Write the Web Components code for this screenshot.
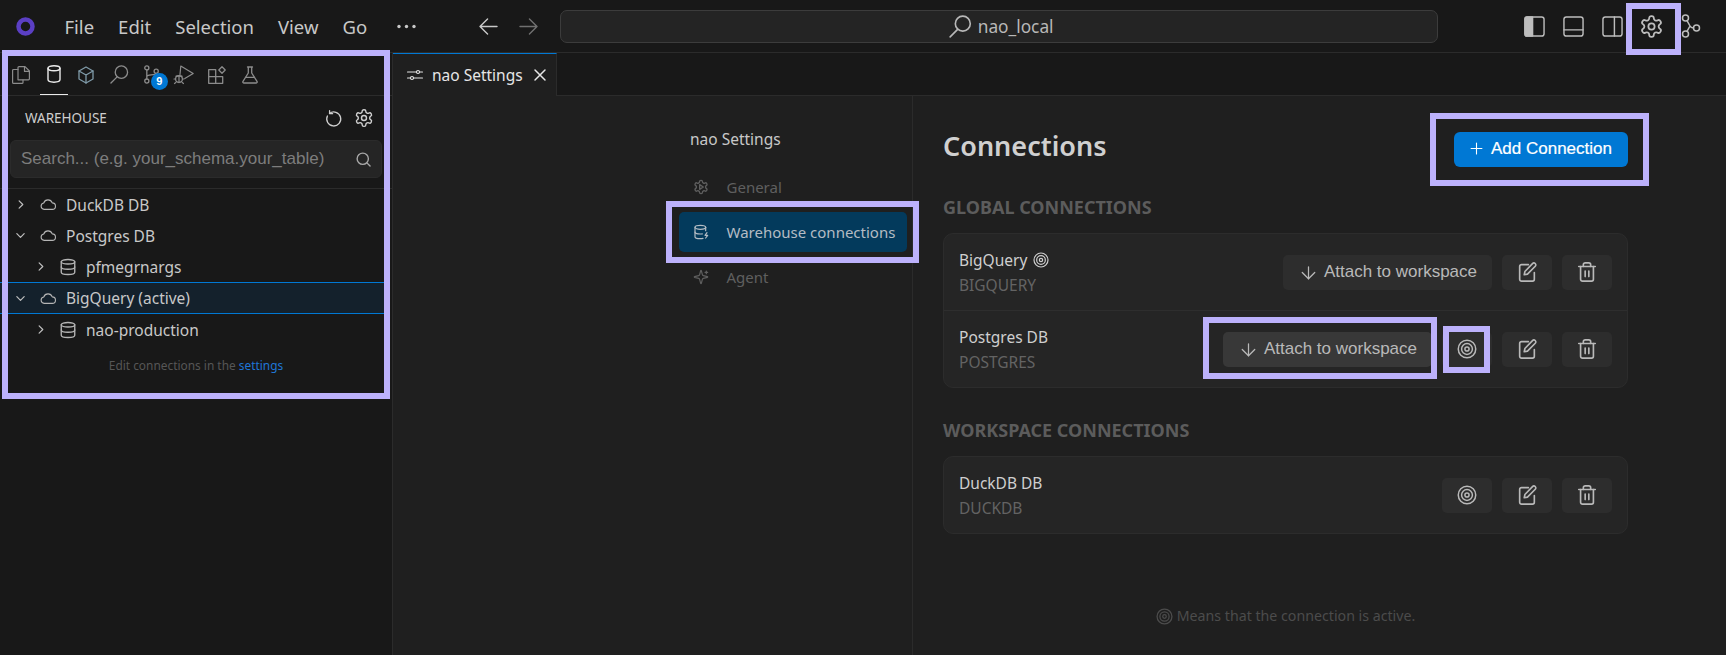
<!DOCTYPE html>
<html lang="en">
<head>
<meta charset="UTF-8">
<title>nao Settings</title>
<style>
  html, body { margin: 0; height: 100%; overflow: hidden; background: #181818; }
  body { font-family: "Noto Sans", "Open Sans", sans-serif; color: #cccccc; }
</style>
</head>
<body>
<nao-app></nao-app>

<script>
  const SW = 'fill="none" stroke="currentColor" stroke-linecap="round" stroke-linejoin="round"';
  const GEAR = '<path d="M12.22 2h-.44a2 2 0 0 0-2 2v.18a2 2 0 0 1-1 1.73l-.43.25a2 2 0 0 1-2 0l-.15-.08a2 2 0 0 0-2.73.73l-.22.38a2 2 0 0 0 .73 2.73l.15.1a2 2 0 0 1 1 1.72v.51a2 2 0 0 1-1 1.74l-.15.09a2 2 0 0 0-.73 2.73l.22.38a2 2 0 0 0 2.73.73l.15-.08a2 2 0 0 1 2 0l.43.25a2 2 0 0 1 1 1.73V20a2 2 0 0 0 2 2h.44a2 2 0 0 0 2-2v-.18a2 2 0 0 1 1-1.73l.43-.25a2 2 0 0 1 2 0l.15.08a2 2 0 0 0 2.73-.73l.22-.39a2 2 0 0 0-.73-2.73l-.15-.08a2 2 0 0 1-1-1.74v-.5a2 2 0 0 1 1-1.74l.15-.09a2 2 0 0 0 .73-2.73l-.22-.38a2 2 0 0 0-2.73-.73l-.15.08a2 2 0 0 1-2 0l-.43-.25a2 2 0 0 1-1-1.73V4a2 2 0 0 0-2-2z"/>';
  // every icon is [viewBox, stroke width, markup]
  const ICONS = {
    gear: ['0 0 24 24', 1.7, GEAR + '<circle cx="12" cy="12" r="3"/>'],
    generalcog: ['0 0 24 24', 2, GEAR + '<path d="M10 8.5v7l5.5-3.5z"/>'],
    target: ['0 0 24 24', 1.8, '<circle cx="12" cy="12" r="10.5"/><circle cx="12" cy="12" r="6.5"/><circle cx="12" cy="12" r="2.5"/>'],
    edit: ['0 0 24 24', 1.8, '<path d="M20 12.5V20a2 2 0 0 1-2 2H6a2 2 0 0 1-2-2V6a2 2 0 0 1 2-2h7.5"/><path d="M18 2.8a2 2 0 0 1 3 2.9L12.5 14.3 9 15l.7-3.5z"/>'],
    trash: ['0 0 24 24', 1.8, '<path d="M3 6h18"/><path d="M19 6v14a2 2 0 0 1-2 2H7a2 2 0 0 1-2-2V6"/><path d="M8 6V4a2 2 0 0 1 2-2h4a2 2 0 0 1 2 2v2"/><path d="M10 11v6"/><path d="M14 11v6"/>'],
    down: ['0 0 24 24', 2, '<path d="M12 3v19"/><path d="M22 12 12 22 2 12"/>'],
    plus: ['0 0 24 24', 2, '<path d="M12 2v20"/><path d="M2 12h20"/>'],
    chevright: ['0 0 24 24', 2.6, '<path d="m9 4 8 8-8 8"/>'],
    chevdown: ['0 0 24 24', 2.6, '<path d="m4 8 8 8 8-8"/>'],
    cloud: ['0 0 24 17', 1.7, '<path d="M18.5 16H6a5 5 0 0 1-.6-9.9A7 7 0 0 1 18.6 6 5 5 0 0 1 18.5 16z"/>'],
    db: ['0 0 24 24', 1.8, '<ellipse cx="12" cy="5" rx="9" ry="3"/><path d="M3 5v14a9 3 0 0 0 18 0V5"/><path d="M3 12a9 3 0 0 0 18 0"/>'],
    dbzap: ['0 0 24 24', 1.8, '<ellipse cx="11" cy="5" rx="8" ry="3"/><path d="M3 5v14c0 1.7 3.6 3 8 3 1.5 0 3-.2 4-.5"/><path d="M3 12c0 1.7 3.6 3 8 3 1 0 2-.1 3-.3"/><path d="M19 5v5"/><path d="M21 13l-3 4h4l-3 4"/>'],
    sparkle: ['0 0 24 24', 1.8, '<path d="M9.937 15.5A2 2 0 0 0 8.5 14.063l-6.135-1.582a.5.5 0 0 1 0-.962L8.5 9.936A2 2 0 0 0 9.937 8.5l1.582-6.135a.5.5 0 0 1 .963 0L14.063 8.5A2 2 0 0 0 15.5 9.937l6.135 1.581a.5.5 0 0 1 0 .964L15.5 14.063a2 2 0 0 0-1.437 1.437l-1.582 6.135a.5.5 0 0 1-.963 0z"/><path d="M20 3v4"/><path d="M22 5h-4"/>'],
    sliders: ['0 0 16 12', 1.1, '<path d="M0.5 3h9M12.5 3h3M0.5 9h3M6.5 9h9"/><circle cx="11" cy="3" r="1.5"/><circle cx="5" cy="9" r="1.5"/>'],
    close: ['0 0 12 12', 1.5, '<path d="M1 1l10 10M11 1L1 11"/>'],
    search: ['0 0 20 20', 1.4, '<circle cx="12" cy="7.5" r="6.5"/><path d="M7.5 12.5 1 19"/>'],
    lens: ['0 0 16 16', 1.5, '<circle cx="7.2" cy="7.2" r="6"/><path d="M11.6 11.6 15 15"/>'],
    files: ['0 0 18 18', 1.2, '<path d="M6 3.5H1.6a1 1 0 0 0-1 1V16.4a1 1 0 0 0 1 1H10a1 1 0 0 0 1-1V14"/><path d="M6 13.8V1.6a1 1 0 0 1 1-1h6l4.4 4.4V12.8a1 1 0 0 1-1 1z"/><path d="M12.5 .8v4.6h4.8"/>'],
    cyl: ['0 0 14 18', 1.4, '<ellipse cx="7" cy="3.2" rx="6" ry="2.5"/><path d="M1 3.2v11.4c0 1.4 2.7 2.6 6 2.6s6-1.2 6-2.6V3.2"/>'],
    cube: ['0 0 16 18', 1.3, '<path d="M8 1 15 5v8l-7 4-7-4V5z"/><path d="M1 5l7 4 7-4M8 9v8"/>'],
    scm: ['0 0 16 20', 1.4, '<circle cx="3" cy="3" r="2.2"/><circle cx="3" cy="17" r="2.2"/><circle cx="13" cy="6.5" r="2.2"/><path d="M3 5.2v9.6M3 12c0-2 10-1 10-3.3"/>'],
    debug: ['0 0 20 19', 1.2, '<path d="M6 9.5 6.8 1l12.4 7.4-8.4 5"/><circle cx="5" cy="14" r="3.4"/><path d="M2 11.2h6M1.6 14H0M8.4 14h1.6M1.8 17.6.5 18.5M8.2 17.6l1.3.9M5 10.6v7"/>'],
    ext: ['0 0 18 18', 1.3, '<path d="M.7 3.7h7v7h-7zM.7 10.7h7v6.6h-7zM7.7 10.7h7v6.6h-7z"/><path d="M14 .8 17.2 4 14 7.2 10.8 4z"/>'],
    flask: ['0 0 16 18', 1.3, '<path d="M5.5 1h5M6.3 1v6L1 15.3c-.5.8 0 1.7 1 1.7h12c1 0 1.5-.9 1-1.7L9.7 7V1"/><path d="M3.6 11.4h8.8"/>'],
    refresh: ['0 0 16 16', 1.3, '<path d="M3.5 3.4A7 7 0 1 1 1.4 6"/><path d="M3.6.7v3h3"/>'],
    back: ['0 0 20 18', 1.5, '<path d="M1 9h18M9 1 1 9l8 8"/>'],
    forward: ['0 0 20 18', 1.5, '<path d="M1 9h18M11 1l8 8-8 8"/>'],
    panelleft: ['0 0 22 22', 1.5, '<rect x="1" y="1" width="20" height="20" rx="2.5"/><path d="M3 1h6v20H3a2 2 0 0 1-2-2V3a2 2 0 0 1 2-2z" fill="currentColor"/>'],
    panelbottom: ['0 0 22 22', 1.5, '<rect x="1" y="1" width="20" height="20" rx="2.5"/><path d="M1 14.5h20"/>'],
    panelright: ['0 0 22 22', 1.5, '<rect x="1" y="1" width="20" height="20" rx="2.5"/><path d="M13 1v20"/>'],
    fork: ['0 0 20 24', 1.5, '<circle cx="4.500" cy="4" r="3"/><circle cx="4.500" cy="20" r="3"/><circle cx="15.500" cy="14" r="3"/><path d="M6 6.600 9 12c.5 1 1.300 1.800 3.500 2M6 17.400 9 12"/>']
  };

  class UiIcon extends HTMLElement {
    connectedCallback() {
      const [box, sw, body] = ICONS[this.getAttribute('name')];
      const w = this.getAttribute('w') || 16;
      const h = this.getAttribute('h') || w;
      const root = this.shadowRoot || this.attachShadow({ mode: 'open' });
      root.innerHTML = `
        <style>:host { display: inline-flex; flex: none; } svg { display: block; overflow: visible; }</style>
        <svg width="${w}" height="${h}" viewBox="${box}" stroke-width="${sw}" ${SW}>${body}</svg>`;
    }
  }
  customElements.define('ui-icon', UiIcon);

  class TitleBar extends HTMLElement {
    constructor() {
      super();
      this.attachShadow({ mode: 'open' });
      this.shadowRoot.innerHTML = `
        <style>
          :host { display: flex; align-items: center; height: 52px; background: #181818; border-bottom: 1px solid #2b2b2b; padding-left: 16px; font-size: 18.500px; color: #c8c8c8; }
          .logo { width: 19px; height: 19px; margin-right: 29.500px; flex: none; }
          .menus { display: flex; gap: 24px; }
          .dots { margin-left: 29.500px; width: 19px; color: #c8c8c8; }
          .nav { display: flex; gap: 21px; margin-left: 63px; color: #c8c8c8; }
          .nav .off { color: #707070; }
          .center { width: 878px; height: 33px; margin-left: 22px; box-sizing: border-box; background: #242424; border: 1px solid #3c3c3c; border-radius: 7px; display: flex; align-items: center; justify-content: center; gap: 6px; padding-left: 5px; color: #b8b8b8; font-size: 17.300px; }
          .right { display: flex; align-items: center; margin-left: 86px; gap: 18px; color: #bdbdbd; }
        </style>
        <svg class="logo" viewBox="0 0 19 19"><circle cx="9.500" cy="9.500" r="7" fill="none" stroke="#5b3fc4" stroke-width="4.500"/></svg>
        <div class="menus"><span>File</span><span>Edit</span><span>Selection</span><span>View</span><span>Go</span></div>
        <svg class="dots" viewBox="0 0 19 5" height="5"><g fill="currentColor"><circle cx="2" cy="2.500" r="1.700"/><circle cx="9.500" cy="2.500" r="1.700"/><circle cx="17" cy="2.500" r="1.700"/></g></svg>
        <div class="nav"><ui-icon name="back" w="19" h="17"></ui-icon><ui-icon class="off" name="forward" w="19" h="17"></ui-icon></div>
        <div class="center"><ui-icon name="search" w="23"></ui-icon><span>nao_local</span></div>
        <div class="right">
          <ui-icon name="panelleft" w="21"></ui-icon>
          <ui-icon name="panelbottom" w="21"></ui-icon>
          <ui-icon name="panelright" w="21"></ui-icon>
          <ui-icon style="margin-left:-2px" name="gear" w="25"></ui-icon>
          <ui-icon style="margin-left:-1px" name="fork" w="20" h="24"></ui-icon>
        </div>`;
    }
  }
  customElements.define('title-bar', TitleBar);

  class ActivityTabs extends HTMLElement {
    constructor() {
      super();
      this.attachShadow({ mode: 'open' });
      this.shadowRoot.innerHTML = `
        <style>
          :host { display: flex; gap: 4.700px; height: 43px; padding-left: 7px; border-bottom: 1px solid #2b2b2b; box-sizing: border-box; color: #8c8c8c; }
          div { width: 28px; height: 42px; display: flex; align-items: center; justify-content: center; padding-top: 1px; box-sizing: border-box; position: relative; }
          .on { color: #eaeaea; border-bottom: 1px solid #eaeaea; }
          .badge { position: absolute; left: 13px; top: 20px; width: 17px; height: 17px; border-radius: 50%; background: #0078d4; color: #fff; font: bold 11px/17px "Liberation Sans", sans-serif; text-align: center; }
        </style>
        <div><ui-icon name="files" w="18"></ui-icon></div>
        <div class="on"><ui-icon name="cyl" w="14" h="18"></ui-icon></div>
        <div style="color:#7f9aa8"><ui-icon name="cube" w="16" h="18"></ui-icon></div>
        <div><ui-icon name="search" w="19"></ui-icon></div>
        <div><ui-icon name="scm" w="15" h="19"></ui-icon><span class="badge">9</span></div>
        <div><ui-icon name="debug" w="20" h="19"></ui-icon></div>
        <div><ui-icon name="ext" w="18"></ui-icon></div>
        <div><ui-icon name="flask" w="16" h="18"></ui-icon></div>`;
    }
  }
  customElements.define('activity-tabs', ActivityTabs);

  class TreeRow extends HTMLElement {
    constructor() {
      super();
      this.attachShadow({ mode: 'open' });
    }
    connectedCallback() {
      const level = +this.getAttribute('level') || 0;
      const open = this.hasAttribute('open');
      const icon = level ? 'db' : 'cloud';
      this.shadowRoot.innerHTML = `
        <style>
          :host { display: flex; align-items: center; height: 31px; box-sizing: border-box; font-size: 15.500px; color: #c8c8c8; padding-left: ${15 + level * 20}px; }
          :host([active]) { height: 32px; margin-right: 6px; background: #14212c; border-top: 1px solid #0078d4; border-bottom: 1px solid #0078d4; }
          .ch { width: 10px; display: flex; justify-content: center; color: #c0c0c0; }
          .ic { margin-left: ${level ? 14 : 15}px; display: flex; color: #b5b5b5; }
          .t { margin-left: ${level ? 9 : 10}px; }
        </style>
        <span class="ch"><ui-icon name="${open ? 'chevdown' : 'chevright'}" w="11"></ui-icon></span>
        <span class="ic"><ui-icon name="${icon}" w="${level ? 18 : 16}" h="${level ? 18 : 11}"></ui-icon></span>
        <span class="t"><slot></slot></span>`;
    }
  }
  customElements.define('tree-row', TreeRow);

  class SidePanel extends HTMLElement {
    constructor() {
      super();
      this.attachShadow({ mode: 'open' });
      this.shadowRoot.innerHTML = `
        <style>
          :host { display: block; width: 393px; box-sizing: border-box; flex: none; background: #181818; border-right: 1px solid #2b2b2b; }
          .head { display: flex; align-items: center; height: 44px; padding: 0 18px 0 25px; font-size: 13.500px; color: #cfcfcf; }
          .head span { flex: 1; }
          .head ui-icon + ui-icon { margin-left: 12px; }
          .find { display: flex; align-items: center; height: 38px; margin: 0 10px; padding: 0 10px 0 10px; box-sizing: border-box; background: #252525; border: 1px solid #2b2b2b; border-radius: 6px; font: 17px "Liberation Sans", Arial, sans-serif; color: #7d7d7d; }
          .find span { flex: 1; white-space: nowrap; }
          .find ui-icon { color: #a8a8a8; }
          hr { border: 0; border-top: 1px solid #2b2b2b; margin: 10px 0 0; }
          .note { text-align: center; font-size: 11.900px; line-height: 20px; margin-top: 10px; color: #565656; }
          .note a { color: #1f76d6; text-decoration: none; }
        </style>
        <activity-tabs></activity-tabs>
        <div class="head"><span>WAREHOUSE</span><ui-icon name="refresh" w="16"></ui-icon><ui-icon name="gear" w="20"></ui-icon></div>
        <div class="find"><span>Search... (e.g. your_schema.your_table)</span><ui-icon name="lens" w="15"></ui-icon></div>
        <hr>
        <tree-row>DuckDB DB</tree-row>
        <tree-row open>Postgres DB</tree-row>
        <tree-row level="1">pfmegrnargs</tree-row>
        <tree-row open active>BigQuery (active)</tree-row>
        <tree-row level="1">nao-production</tree-row>
        <div class="note">Edit connections in the <a>settings</a></div>`;
    }
  }
  customElements.define('side-panel', SidePanel);

  class NavItem extends HTMLElement {
    constructor() {
      super();
      this.attachShadow({ mode: 'open' });
    }
    connectedCallback() {
      this.shadowRoot.innerHTML = `
        <style>
          :host { display: flex; align-items: center; height: 40px; margin-bottom: 5px; width: 228px; padding-left: 14px; box-sizing: border-box; gap: 17.500px; border-radius: 5px; font-size: 15px; color: #5f5f5f; }
          :host([on]) { background: #033a5c; color: #b4bcc4; }
        </style>
        <ui-icon name="${this.getAttribute('icon')}" w="16"></ui-icon><span><slot></slot></span>`;
    }
  }
  customElements.define('nav-item', NavItem);

  class ActBtn extends HTMLElement {
    constructor() {
      super();
      this.attachShadow({ mode: 'open' });
    }
    connectedCallback() {
      const wide = this.hasAttribute('wide');
      const icon = this.getAttribute('icon');
      this.shadowRoot.innerHTML = `
        <style>
          :host { display: inline-flex; align-items: center; justify-content: center; flex: none; height: 35px; min-width: 50px; box-sizing: border-box; background: #2d2d2d; border-radius: 5px; color: #b9b9b9; font: 17px "Liberation Sans", Arial, sans-serif; gap: 8px; }
          :host([wide]) { padding: 0 15px 0 18px; }
          :host([hot]) { background: #383838; }
        </style>
        <ui-icon name="${icon}" w="${wide ? 15 : icon === 'target' ? 20 : 22}"></ui-icon><slot></slot>`;
    }
  }
  customElements.define('act-btn', ActBtn);

  class ConnRow extends HTMLElement {
    constructor() {
      super();
      this.attachShadow({ mode: 'open' });
    }
    connectedCallback() {
      const mode = this.getAttribute('mode');
      this.shadowRoot.innerHTML = `
        <style>
          :host { display: flex; align-items: center; padding: 0 15px; flex: 1; gap: 10px; }
          :host(:not(:last-child)) { flex: none; height: 77px; box-sizing: border-box; border-bottom: 1px solid #2e2e2e; }
          .info { flex: 1; }
          .name { display: flex; align-items: center; gap: 6px; line-height: 20px; font-size: 15.500px; color: #cfcfcf; }
          .type { line-height: 20px; margin-top: 5px; font-size: 15.500px; color: #636363; }
        </style>
        <div class="info">
          <div class="name"><slot></slot>${this.hasAttribute('active') ? '<ui-icon name="target" w="16"></ui-icon>' : ''}</div>
          <div class="type">${this.getAttribute('type')}</div>
        </div>
        ${mode === 'global-active' ? '<act-btn wide icon="down">Attach to workspace</act-btn>' : ''}
        ${mode === 'global' ? '<act-btn wide hot icon="down">Attach to workspace</act-btn><act-btn icon="target"></act-btn>' : ''}
        ${mode === 'local' ? '<act-btn icon="target"></act-btn>' : ''}
        <act-btn icon="edit"></act-btn>
        <act-btn icon="trash"></act-btn>`;
    }
  }
  customElements.define('conn-row', ConnRow);

  class ConnCard extends HTMLElement {
    constructor() {
      super();
      this.attachShadow({ mode: 'open' });
      this.shadowRoot.innerHTML = `
        <style>
          :host { display: flex; flex-direction: column; box-sizing: border-box; background: #252525; border: 1px solid #2c2c2c; border-radius: 10px; }
        </style>
        <slot></slot>`;
    }
  }
  customElements.define('conn-card', ConnCard);

  class SectionLabel extends HTMLElement {
    constructor() {
      super();
      this.attachShadow({ mode: 'open' });
      this.shadowRoot.innerHTML = `
        <style>:host { display: block; font-size: 18px; line-height: 22px; font-weight: 700; color: #5c5c5c; }</style>
        <slot></slot>`;
    }
  }
  customElements.define('section-label', SectionLabel);

  class SettingsPage extends HTMLElement {
    constructor() {
      super();
      this.attachShadow({ mode: 'open' });
      this.shadowRoot.innerHTML = `
        <style>
          :host { display: grid; grid-template-columns: 1fr 233px 814px; flex: 1; min-height: 0; background: #1f1f1f; }
          nav { padding-top: 32px; }
          nav h2 { font-size: 15.500px; font-weight: 400; line-height: 22px; margin: 0 0 17px 11px; color: #c8c8c8; }
          main { border-left: 1px solid #2b2b2b; padding: 0 98px 0 30px; box-sizing: border-box; }
          .top { display: flex; align-items: center; justify-content: space-between; height: 35px; margin-top: 36px; }
          h1 { margin: 0 0 9px; font-size: 27px; font-weight: 600; color: #d0d0d0; }
          .add { display: flex; align-items: center; justify-content: center; gap: 8px; width: 174px; height: 35px; padding-bottom: 2px; box-sizing: border-box; background: #0078d4; border-radius: 6px; color: #fff; font: 17px "Liberation Sans", Arial, sans-serif; -webkit-text-stroke: .2px #fff; }
          section-label { margin-top: 29px; margin-bottom: 15px; }
          .rows3 { height: 155px; }
          .rows1 { height: 78px; }
          .rows2 { margin-top: 31px; }
          .foot { display: flex; align-items: center; justify-content: center; gap: 4px; margin-top: 72px; line-height: 20px; font-size: 14.200px; color: #4c4c4c; }
        </style>
        <div></div>
        <nav>
          <h2>nao Settings</h2>
          <nav-item icon="generalcog">General</nav-item>
          <nav-item icon="dbzap" on>Warehouse connections</nav-item>
          <nav-item icon="sparkle">Agent</nav-item>
        </nav>
        <main>
          <div class="top"><h1>Connections</h1><div class="add"><ui-icon name="plus" w="13"></ui-icon><span>Add Connection</span></div></div>
          <section-label>GLOBAL CONNECTIONS</section-label>
          <conn-card class="rows3">
            <conn-row type="BIGQUERY" mode="global-active" active>BigQuery</conn-row>
            <conn-row type="POSTGRES" mode="global">Postgres DB</conn-row>
          </conn-card>
          <section-label class="rows2">WORKSPACE CONNECTIONS</section-label>
          <conn-card class="rows1">
            <conn-row type="DUCKDB" mode="local">DuckDB DB</conn-row>
          </conn-card>
          <div class="foot"><ui-icon name="target" w="17"></ui-icon><span>Means that the connection is active.</span></div>
        </main>`;
    }
  }
  customElements.define('settings-page', SettingsPage);

  class EditorPane extends HTMLElement {
    constructor() {
      super();
      this.attachShadow({ mode: 'open' });
      this.shadowRoot.innerHTML = `
        <style>
          :host { display: flex; flex-direction: column; flex: 1; min-width: 0; }
          .tabs { display: flex; height: 43px; background: #181818; border-bottom: 1px solid #2b2b2b; box-sizing: border-box; flex: none; }
          .tab { display: flex; align-items: center; width: 164px; height: 43px; box-sizing: border-box; padding-left: 14px; background: #1f1f1f; border-top: 1px solid #0078d4; border-right: 1px solid #2b2b2b; color: #e6e6e6; font-size: 15.500px; }
          .tab span { margin: 0 11px 0 9px; }
        </style>
        <div class="tabs"><div class="tab"><ui-icon name="sliders" w="16" h="12"></ui-icon><span>nao Settings</span><ui-icon name="close" w="12"></ui-icon></div></div>
        <settings-page></settings-page>`;
    }
  }
  customElements.define('editor-pane', EditorPane);

  // the lavender marks are laid over the finished screen
  class HlFrame extends HTMLElement {
    connectedCallback() {
      const root = this.shadowRoot || this.attachShadow({ mode: 'open' });
      const [x, y, w, h] = this.getAttribute('box').split(',');
      root.innerHTML = `<style>:host { position: absolute; left: ${x}px; top: ${y}px; width: ${w}px; height: ${h}px; box-sizing: border-box; border: 6px solid #bcb1fb; pointer-events: none; }</style>`;
    }
  }
  customElements.define('hl-frame', HlFrame);

  class NaoApp extends HTMLElement {
    constructor() {
      super();
      this.attachShadow({ mode: 'open' });
      this.shadowRoot.innerHTML = `
        <style>
          :host { display: flex; flex-direction: column; position: relative; width: 1726px; height: 655px; overflow: hidden; }
          .body { display: flex; flex: 1; min-height: 0; }
        </style>
        <title-bar></title-bar>
        <div class="body"><side-panel></side-panel><editor-pane></editor-pane></div>
        <hl-frame box="2,50,388,349"></hl-frame>
        <hl-frame box="1626,3,55,52"></hl-frame>
        <hl-frame box="666,201,253,62"></hl-frame>
        <hl-frame box="1430,113,219,73"></hl-frame>
        <hl-frame box="1203,317,234,62"></hl-frame>
        <hl-frame box="1443,326,47,47"></hl-frame>`;
    }
  }
  customElements.define('nao-app', NaoApp);
</script>
</body>
</html>
